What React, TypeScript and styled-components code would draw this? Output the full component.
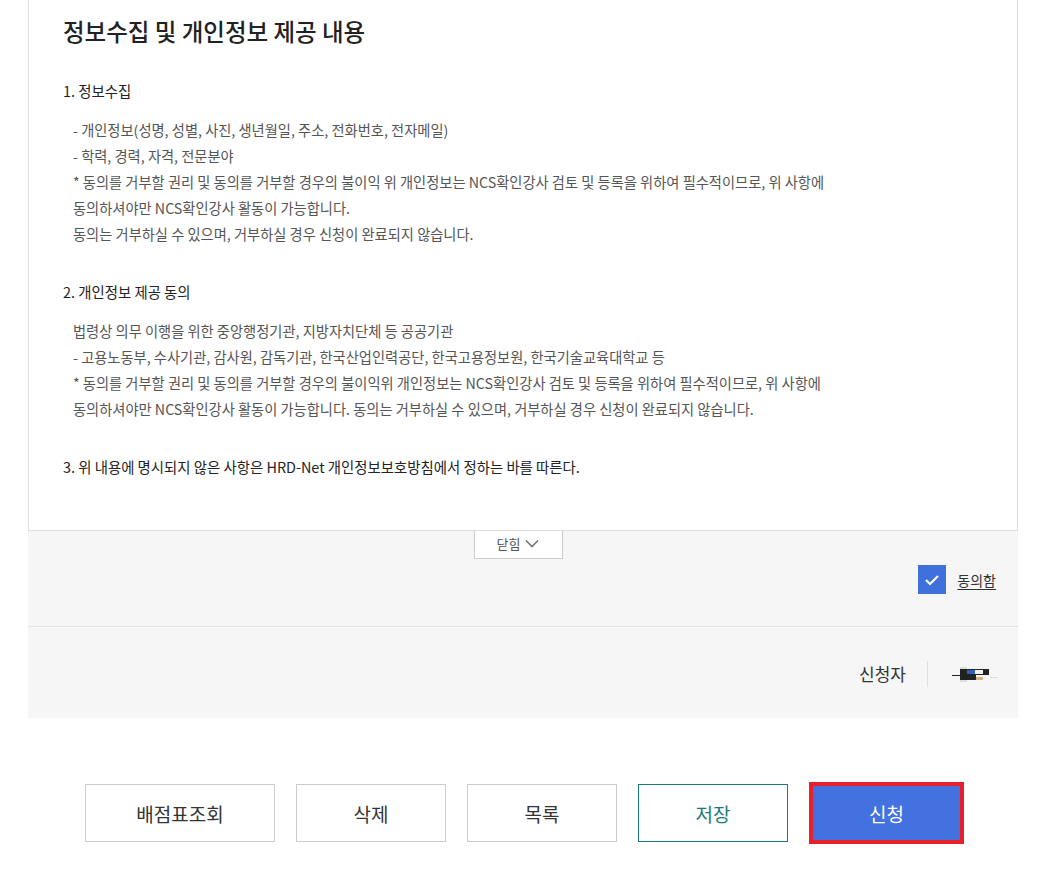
import styled, { createGlobalStyle } from "styled-components";

const GlobalStyle = createGlobalStyle`
  html, body {
    margin: 0;
    padding: 0;
    background: #fff;
  }

  body {
    font-family: "Noto Sans CJK KR", "Noto Sans", sans-serif;
    color: #222;
  }
`;

const Page = styled.div`
  width: 990px;
  margin-left: 28px;
`;

const ContentBox = styled.div`
  border: 1px solid #ddd;
  border-top: none;
  padding: 14px 34px 50px 34px;
  background: #fff;
`;

const Title = styled.h2`
  margin: 0 0 30px;
  font-size: 23.5px;
  line-height: 34px;
  font-weight: 500;
  color: #222;
`;

const SectionHead = styled.h3`
  margin: 0;
  font-size: 14.4px;
  line-height: 26px;
  font-weight: 400;
  color: #222;
`;

const Section = styled.div`
  & + & {
    margin-top: 32px;
  }
`;

const Body = styled.div`
  margin-top: 13px;
  padding-left: 10px;
  font-size: 14.25px;
  line-height: 26px;
  color: #555;
`;

const AgreeArea = styled.div`
  background: #f6f6f6;
  height: 95px;
  display: flex;
  flex-direction: column;
`;

const ToggleButton = styled.button`
  align-self: center;
  margin-right: 10px;
  width: 89px;
  height: 28px;
  border: 1px solid #ccc;
  border-top: none;
  background: #fff;
  font-family: inherit;
  font-size: 13px;
  color: #555;
  display: flex;
  align-items: center;
  justify-content: center;
  gap: 5px;
  padding: 0 0 2px;
  cursor: pointer;
`;

const AgreeRow = styled.div`
  display: flex;
  justify-content: flex-end;
  align-items: center;
  gap: 11px;
  padding: 6px 22px 0 0;
`;

const CheckBox = styled.span`
  width: 28px;
  height: 29px;
  background: #3f70dc;
  display: flex;
  align-items: center;
  justify-content: center;
`;

const AgreeLabel = styled.label`
  font-size: 14px;
  color: #333;
  text-decoration: underline;
  text-underline-offset: 3px;
`;

const ApplicantRow = styled.div`
  background: #f6f6f6;
  border-top: 1px solid #e2e2e2;
  height: 91px;
  display: flex;
  justify-content: flex-end;
  align-items: center;
  padding-right: 20px;
`;

const ApplicantLabel = styled.span`
  font-size: 17px;
  color: #333;
  padding-right: 21px;
  border-right: 1px solid #e0e0e0;
  line-height: 26px;
  margin-top: 2px;
`;

const Signature = styled.svg`
  margin-left: 24px;
  margin-top: 2px;
`;

const ButtonRow = styled.div`
  display: flex;
  justify-content: center;
  gap: 21px;
  margin-top: 66px;
  padding-left: 3px;
`;

type ButtonKind = "default" | "save" | "submit";

const ActionButton = styled.button<{ $kind?: ButtonKind; $wide?: boolean }>`
  width: ${({ $wide }) => ($wide ? "190px" : "150px")};
  height: 58px;
  font-family: inherit;
  font-size: 19px;
  cursor: pointer;
  background: ${({ $kind }) => ($kind === "submit" ? "#4372e0" : "#fff")};
  color: ${({ $kind }) =>
    $kind === "save" ? "#1b7b7b" : $kind === "submit" ? "#fff" : "#333"};
  border: ${({ $kind }) =>
    $kind === "save"
      ? "1px solid #1b7b7b"
      : $kind === "submit"
      ? "4px solid #e8202a"
      : "1px solid #ccc"};
  ${({ $kind }) => ($kind === "submit" ? "width: 155px; height: 62px; margin-top: -2px;" : "")}
`;

export default function App() {
  return (
    <>
      <GlobalStyle />
      <Page>
        <ContentBox>
          <Title>정보수집 및 개인정보 제공 내용</Title>
          <Section>
            <SectionHead>1. 정보수집</SectionHead>
            <Body>
              - 개인정보(성명, 성별, 사진, 생년월일, 주소, 전화번호, 전자메일)
              <br />
              - 학력, 경력, 자격, 전문분야
              <br />* 동의를 거부할 권리 및 동의를 거부할 경우의 불이익 위
              개인정보는 NCS확인강사 검토 및 등록을 위하여 필수적이므로, 위
              사항에
              <br />
              동의하셔야만 NCS확인강사 활동이 가능합니다.
              <br />
              동의는 거부하실 수 있으며, 거부하실 경우 신청이 완료되지
              않습니다.
            </Body>
          </Section>
          <Section>
            <SectionHead>2. 개인정보 제공 동의</SectionHead>
            <Body>
              법령상 의무 이행을 위한 중앙행정기관, 지방자치단체 등 공공기관
              <br />
              - 고용노동부, 수사기관, 감사원, 감독기관, 한국산업인력공단,
              한국고용정보원, 한국기술교육대학교 등
              <br />* 동의를 거부할 권리 및 동의를 거부할 경우의 불이익위
              개인정보는 NCS확인강사 검토 및 등록을 위하여 필수적이므로, 위
              사항에
              <br />
              동의하셔야만 NCS확인강사 활동이 가능합니다. 동의는 거부하실 수
              있으며, 거부하실 경우 신청이 완료되지 않습니다.
            </Body>
          </Section>
          <Section>
            <SectionHead>
              3. 위 내용에 명시되지 않은 사항은 HRD-Net 개인정보보호방침에서
              정하는 바를 따른다.
            </SectionHead>
          </Section>
        </ContentBox>

        <AgreeArea>
          <ToggleButton type="button">
            닫힘
            <svg width="14" height="9" viewBox="0 0 14 9">
              <path d="M1 1.5l6 6 6-6" fill="none" stroke="#777" strokeWidth="1.7" />
            </svg>
          </ToggleButton>
          <AgreeRow>
            <CheckBox>
              <svg width="16" height="12" viewBox="0 0 16 12">
                <path d="M2 6l4 4 8-8" fill="none" stroke="#fff" strokeWidth="2.2" />
              </svg>
            </CheckBox>
            <AgreeLabel>동의함</AgreeLabel>
          </AgreeRow>
        </AgreeArea>

        <ApplicantRow>
          <ApplicantLabel>신청자</ApplicantLabel>
          <Signature width="46" height="20" viewBox="0 0 46 20">
            <rect x="0" y="11" width="8" height="1" fill="#222" />
            <rect x="8" y="3" width="7" height="15" fill="#ddd" />
            <rect x="8" y="5" width="7" height="11" fill="#222" />
            <rect x="15" y="5" width="22" height="6" fill="#222" />
            <rect x="15" y="6" width="8" height="4" fill="#2b63b8" />
            <rect x="23" y="6" width="8" height="4" fill="#f3f3f3" />
            <rect x="15" y="11" width="9" height="5" fill="#222" />
            <rect x="24" y="13" width="7" height="3" fill="#d8b080" />
            <rect x="38" y="13" width="8" height="1" fill="#ddd" />
          </Signature>
        </ApplicantRow>

        <ButtonRow>
          <ActionButton type="button" $wide>
            배점표조회
          </ActionButton>
          <ActionButton type="button">삭제</ActionButton>
          <ActionButton type="button">목록</ActionButton>
          <ActionButton type="button" $kind="save">
            저장
          </ActionButton>
          <ActionButton type="button" $kind="submit">
            신청
          </ActionButton>
        </ButtonRow>
      </Page>
    </>
  );
}
